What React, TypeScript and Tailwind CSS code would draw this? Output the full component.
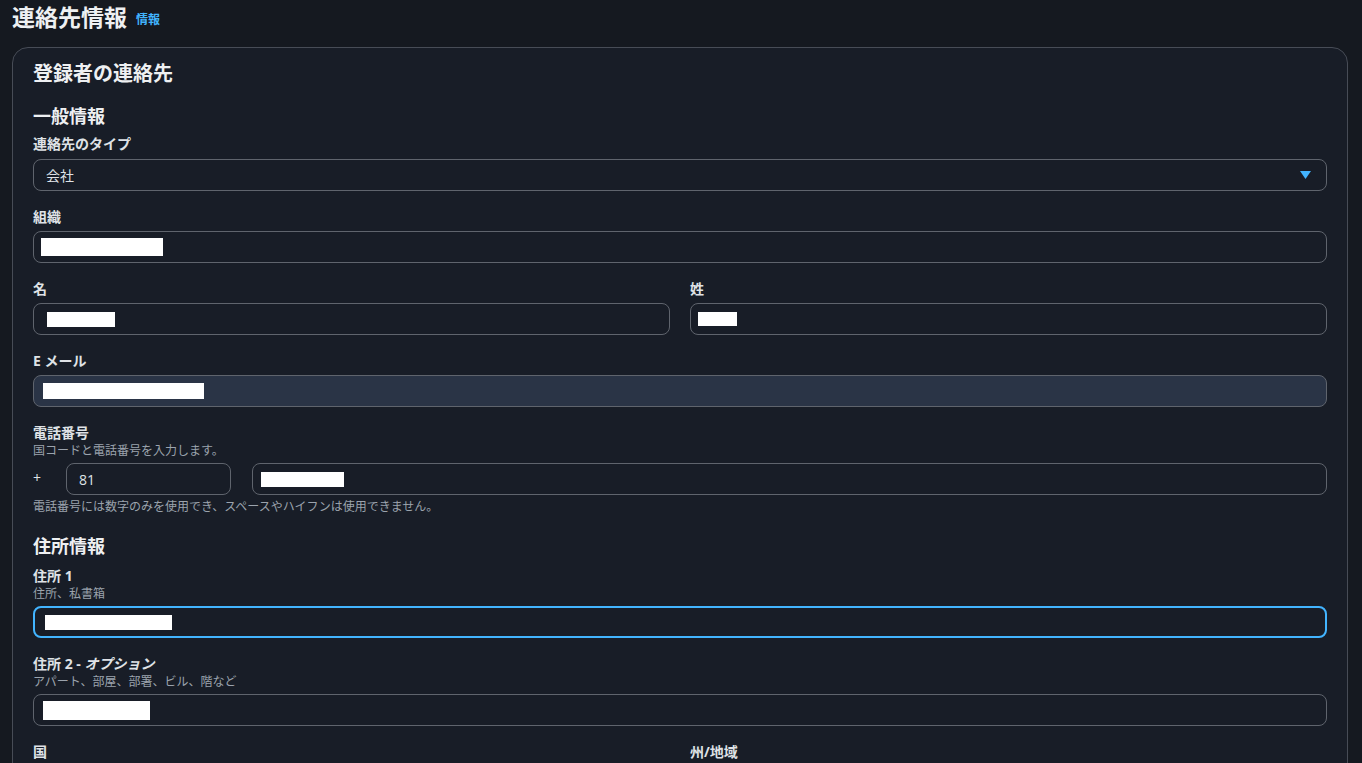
import React from "react";

const font = { fontFamily: '"Open Sans","Noto Sans CJK JP",sans-serif' };

function Label({ children }: { children: React.ReactNode }) {
  return <div className="text-[14px] leading-[20px] font-bold text-[#dfe2e6]">{children}</div>;
}

function Desc({ children }: { children: React.ReactNode }) {
  return <div className="text-[12px] leading-[16px] text-[#9ba3ad]">{children}</div>;
}

function Redact({ w, h, ml = 0 }: { w: number; h: number; ml?: number }) {
  return <div className="bg-white" style={{ width: w, height: h, marginLeft: ml }} />;
}

function Input({
  children,
  className = "",
}: {
  children?: React.ReactNode;
  className?: string;
}) {
  return (
    <div
      className={
        "h-[32px] rounded-[8px] border border-[#5f646d] flex items-center " + className
      }
    >
      {children}
    </div>
  );
}

export default function App() {
  return (
    <div className="min-h-screen bg-[#151920] text-[#e9ebed]" style={font}>
      <div className="px-[12px]">
        <div className="h-[47px] flex items-start pt-[3px]">
          <h1 className="text-[23px] leading-[28px] font-bold text-[#eef0f2]">連絡先情報</h1>
          <span className="ml-[9px] mt-[9px] text-[12px] leading-[16px] font-bold text-[#42b4ff]">情報</span>
        </div>
        <div className="rounded-[16px] border border-[#474c56] bg-[#181d27] px-[20px] pt-[12px] pb-[40px] mr-[2px]">
          <h2 className="text-[20px] leading-[28px] font-bold text-[#eef0f2]">登録者の連絡先</h2>
          <h3 className="mt-[16px] text-[18px] leading-[24px] font-bold text-[#eef0f2]">一般情報</h3>

          <div className="mt-[6px]">
            <Label>連絡先のタイプ</Label>
            <Input className="mt-[5px] pl-[12px] pr-[15px] justify-between">
              <span className="text-[14px] text-[#dfe2e6]">会社</span>
              <svg width="11" height="8" viewBox="0 0 11 8">
                <path d="M0 0 H11 L5.5 8 Z" fill="#42b4ff" />
              </svg>
            </Input>
          </div>

          <div className="mt-[16px]">
            <Label>組織</Label>
            <Input className="mt-[4px] pl-[7px]">
              <Redact w={122} h={18} />
            </Input>
          </div>

          <div className="mt-[16px] grid grid-cols-2 gap-x-[20px]">
            <div>
              <Label>名</Label>
              <Input className="mt-[4px] pl-[13px]">
                <Redact w={68} h={15} />
              </Input>
            </div>
            <div>
              <Label>姓</Label>
              <Input className="mt-[4px] pl-[7px]">
                <Redact w={39} h={14} ml={0} />
              </Input>
            </div>
          </div>

          <div className="mt-[16px]">
            <Label>E メール</Label>
            <Input className="mt-[4px] pl-[9px] bg-[#2a3446]">
              <Redact w={161} h={16} />
            </Input>
          </div>

          <div className="mt-[16px]">
            <Label>電話番号</Label>
            <Desc>国コードと電話番号を入力します。</Desc>
            <div className="mt-[4px] flex items-center">
              <span className="w-[33px] text-[14px] text-[#dfe2e6] -mt-[4px]">+</span>
              <Input className="w-[165px] pl-[12px]">
                <span className="text-[14px] text-[#dfe2e6]">81</span>
              </Input>
              <Input className="ml-[21px] flex-1 pl-[8px]">
                <Redact w={83} h={15} />
              </Input>
            </div>
            <div className="mt-[4px]">
              <Desc>電話番号には数字のみを使用でき、スペースやハイフンは使用できません。</Desc>
            </div>
          </div>

          <h3 className="mt-[19px] text-[18px] leading-[24px] font-bold text-[#eef0f2]">住所情報</h3>

          <div className="mt-[8px]">
            <Label>住所 1</Label>
            <Desc>住所、私書箱</Desc>
            <div className="mt-[4px] h-[32px] rounded-[8px] border-2 border-[#42b4ff] flex items-center pl-[10px]">
              <Redact w={127} h={15} />
            </div>
          </div>

          <div className="mt-[16px]">
            <Label>
              住所 2 - <i>オプション</i>
            </Label>
            <Desc>アパート、部屋、部署、ビル、階など</Desc>
            <Input className="mt-[4px] pl-[9px]">
              <Redact w={107} h={19} />
            </Input>
          </div>

          <div className="mt-[16px] grid grid-cols-2 gap-x-[20px]">
            <div>
              <Label>国</Label>
              <Input className="mt-[4px]" />
            </div>
            <div>
              <Label>州/地域</Label>
              <Input className="mt-[4px]" />
            </div>
          </div>
        </div>
      </div>
    </div>
  );
}
